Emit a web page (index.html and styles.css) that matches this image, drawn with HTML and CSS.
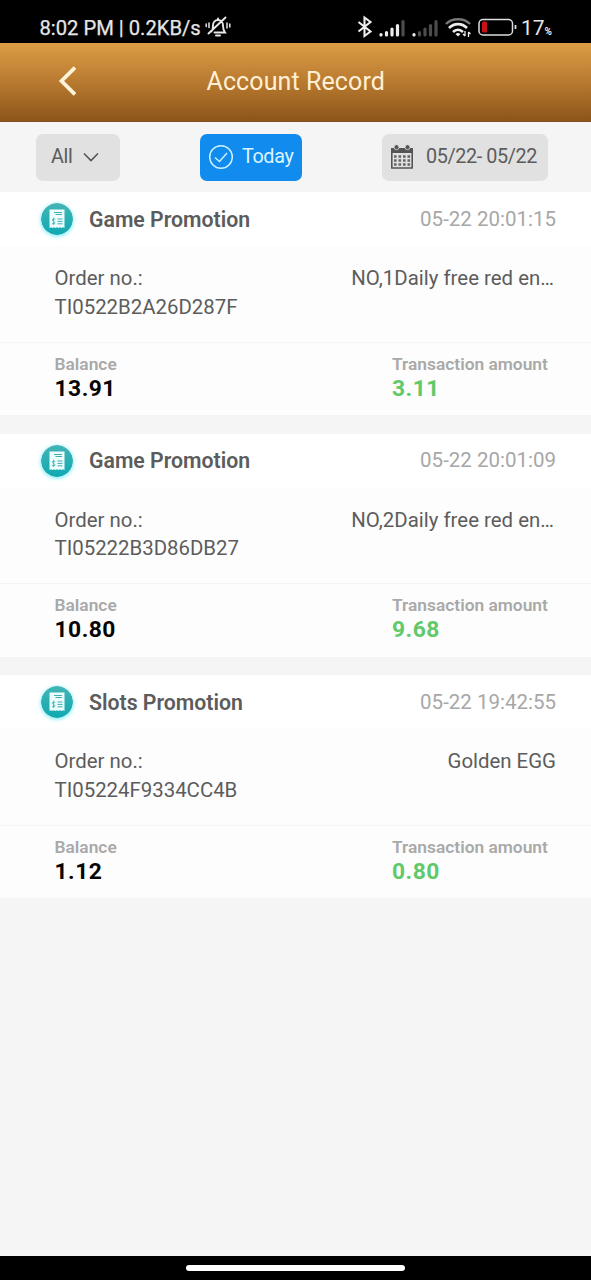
FILE: index.html
```html
<!DOCTYPE html>
<html lang="en">
<head>
<meta charset="utf-8">
<title>Account Record</title>
<link rel="stylesheet" href="styles.css">
</head>
<body>
<svg class="defs" width="0" height="0" aria-hidden="true">
  <defs>
    <linearGradient id="teal" x1="0" y1="0" x2="0" y2="1"><stop offset="0" stop-color="#43b5b6"/><stop offset="1" stop-color="#0fa9b2"/></linearGradient>
    <symbol id="receipt" viewBox="0 0 32 32">
      <circle cx="16" cy="16" r="16" fill="url(#teal)"/>
      <path d="M8.500 6.500h15v18.500l-1.500-.8-1.500.8-1.500-.8-1.500.8-1.500-.8-1.500.8-1.500-.8-1.500.8-1.500-.8-1.500.8z" fill="#eefcfc"/>
      <path d="M13 9.500h8M14.500 11.500h6.500M16.500 16h5M16.500 18.400h5M16.500 20.800h5" stroke="#3ab2b5" stroke-width="1"/>
      <path d="M14.300 16.400c-2.800-1.300-3.900 1-1.900 1.900 2.500 1 1.600 3.400-1.400 2.200M12.600 14.800v7.100" fill="none" stroke="#3ab2b5" stroke-width=".9"/>
    </symbol>
  </defs>
</svg>
<div class="screen">
  <div class="status">
    <span class="status-text">8:02 PM | 0.2KB/s</span>
    <svg class="bell" width="26" height="22" viewBox="0 0 26 22" fill="none" stroke="#e8e8e8" stroke-width="1.900" stroke-linecap="round">
      <path d="M6.500 15.500c1.200-1.400 1.500-3 1.500-6 0-3.200 2-5.500 5-5.500s5 2.300 5 5.500c0 3.500.5 5 2 7H9.500M11 19.500h4M13 4V2.500M20.500 1.500l-17 16"/>
      <path d="M4 7v4.500M1.200 8v2.400M22 7v5M24.800 8v3" stroke-width="1.500"/>
    </svg>
    <svg class="signals" width="164" height="24" viewBox="0 0 164 24" fill="none">
      <path d="M1.500 7l12 9.500-6 4.500V2.500l6 4.500-12 9.500" stroke="#eee" stroke-width="2.100"/>
      <g stroke="#eee" stroke-width="3.200" stroke-linecap="round">
        <path d="M24 19.500v.5M29.500 17.500v2.500M35 14v6M40.500 10.500v9.500"/><path d="M46 6.500v13.500" stroke="#4c4c4c"/>
        <path d="M57 19.500v.5"/><path d="M62.500 17.500v2.500M68 14v6M73.500 10.500v9.500M79 6.500v13.500" stroke="#4c4c4c"/>
      </g>
      <path d="M89 9c6-6.500 18-6.500 24 0" stroke="#777" stroke-width="2.500"/>
      <path d="M92 13c5-5.200 13-5.200 18 0M96 17c3-3 7-3 10 0" stroke="#eee" stroke-width="2.600"/>
      <path d="M98.500 19q2.500-2 5 0l-2.500 2.500z" fill="#eee"/>
      <path d="M108 16v5M111.500 22v-5M106 19l2 2M111.500 17l2 2" stroke="#eee" stroke-width="1.300"/>
      <rect x="122" y="4.500" width="33.500" height="15.500" rx="4" stroke="#ddd" stroke-width="1.500"/>
      <rect x="125" y="6.500" width="5" height="11" rx="1.500" fill="#c9101b"/>
      <path d="M158.500 10v4" stroke="#ddd" stroke-width="1.800"/>
    </svg>
    <span class="charge">17<small>%</small></span>
  </div>
  <div class="titlebar">
    <svg class="back" width="20" height="32" viewBox="0 0 20 32"><path d="M19 2.500L5.500 16 19 29.500" fill="none" stroke="#fff3da" stroke-width="3.800"/></svg>
    <h1 class="title">Account Record</h1>
  </div>
  <div class="filters">
    <div class="chip chip-all"><span>All</span>
      <svg width="16" height="10" viewBox="0 0 16 10"><path d="M1 1.500l7 7 7-7" fill="none" stroke="#555" stroke-width="1.600"/></svg>
    </div>
    <div class="chip chip-today">
      <svg width="26" height="26" viewBox="0 0 26 26" fill="none" stroke="#c9f2ff" stroke-width="1.500"><circle cx="13" cy="13" r="11.300"/><path d="M7 13.500l4.500 4L19 9"/></svg>
      <span>Today</span>
    </div>
    <div class="chip chip-date">
      <svg width="24" height="25" viewBox="0 0 24 25">
        <path d="M1 9V4h22v5z" fill="#555"/><path d="M1.800 8v16h20.400V8" fill="none" stroke="#555" stroke-width="1.600"/>
        <g fill="#555" stroke="#e1e1e1" stroke-width=".8"><circle cx="6.500" cy="3.200" r="2.500"/><circle cx="17.500" cy="3.200" r="2.500"/></g>
        <path d="M4 12.500h16.500M4 16.500h16.500M4 20.500h16.500" stroke="#666" stroke-width="2.300" stroke-dasharray="2.600 1.900"/>
      </svg>
      <span>05/22- 05/22</span>
    </div>
  </div>
  <div class="records">
    <section class="card">
      <div class="card-head"><svg class="badge"><use href="#receipt"/></svg><h2 class="name">Game Promotion</h2><span class="time">05-22 20:01:15</span></div>
      <div class="card-body"><div class="order">Order no.:<br>TI0522B2A26D287F</div><div class="note clipped">NO,1Daily free red en…</div></div>
      <div class="card-foot"><div class="balance"><div class="label">Balance</div><div class="value">13.91</div></div><div class="amount"><div class="label">Transaction amount</div><div class="value gain">3.11</div></div></div>
    </section>
    <section class="card">
      <div class="card-head"><svg class="badge"><use href="#receipt"/></svg><h2 class="name">Game Promotion</h2><span class="time">05-22 20:01:09</span></div>
      <div class="card-body"><div class="order">Order no.:<br>TI05222B3D86DB27</div><div class="note clipped">NO,2Daily free red en…</div></div>
      <div class="card-foot"><div class="balance"><div class="label">Balance</div><div class="value">10.80</div></div><div class="amount"><div class="label">Transaction amount</div><div class="value gain">9.68</div></div></div>
    </section>
    <section class="card">
      <div class="card-head"><svg class="badge"><use href="#receipt"/></svg><h2 class="name">Slots Promotion</h2><span class="time">05-22 19:42:55</span></div>
      <div class="card-body"><div class="order">Order no.:<br>TI05224F9334CC4B</div><div class="note">Golden EGG</div></div>
      <div class="card-foot"><div class="balance"><div class="label">Balance</div><div class="value">1.12</div></div><div class="amount"><div class="label">Transaction amount</div><div class="value gain">0.80</div></div></div>
    </section>
  </div>
  <div class="navbar"><div class="handle"></div></div>
</div>
</body>
</html>
```
FILE: styles.css
```css
* { box-sizing: border-box; }
body { margin: 0; background: #f5f5f5; font-family: Roboto, "Liberation Sans", sans-serif; color: #5c5c5c; }
h1, h2 { margin: 0; }
svg { display: block; flex: none; }
.defs { position: absolute; }
.screen { width: 591px; height: 1280px; display: flex; flex-direction: column; white-space: nowrap; }

.status { height: 42.5px; flex: none; background: #000; color: #e6e6e6; display: flex; padding: 12px 0 0 39.5px; font-size: 20.2px; line-height: 32px; }
.status-text { width: 165.5px; flex: none; -webkit-text-stroke: .25px; }
.bell { margin-top: 4px; }
.signals { margin: 2.5px 0 0 126px; }
.charge { font-size: 21px; }
.charge small { font-size: 10px; font-weight: 700; }

.titlebar { height: 79px; flex: none; display: flex; align-items: center; padding: 0 0 1px 56px; background: linear-gradient(#dd9d46, #b87a30 50%, #8c5519); border-bottom: 1px solid #80501f; }
.title { margin-left: 130.5px; font-size: 25px; font-weight: 400; color: #fff0d5; letter-spacing: .1px; }

.filters { height: 70.5px; flex: none; display: flex; padding: 12px 0 0 36px; font-size: 19.8px; letter-spacing: -.38px; }
.chip { height: 47px; border-radius: 7px; background: #e1e1e1; display: flex; align-items: center; flex: none; padding-bottom: 1px; }
.chip-all { width: 84px; padding-left: 15px; gap: 11px; }
.chip-today { width: 102px; margin-left: 80px; padding-left: 8px; gap: 8px; background: #118bee; color: #d9f5ff; }
.chip-date { width: 166px; margin-left: 80px; padding-left: 8px; gap: 12px; }

.records { flex: 1; display: flex; flex-direction: column; gap: 18.5px; }
.card { height: 223px; background: #fdfdfd; display: flex; flex-direction: column; }
.card-head { height: 54px; background: #fff; display: flex; align-items: center; padding: 0 35px 0 41px; }
.badge { width: 32px; height: 32px; border-radius: 50%; box-shadow: 0 1px 4px #6deaf5; }
.name { flex: 1; margin-left: 16px; font-size: 21.25px; font-weight: 600; }
.time { font-size: 20.5px; color: #a7a7a7; padding-bottom: 1px; }
.card-body { height: 95.5px; display: flex; justify-content: space-between; padding: 18px 35px 0 54.5px; font-size: 20.4px; line-height: 28.5px; }
.clipped { margin-right: 2px; letter-spacing: .02px; }
.card-foot { flex: 1; border-top: 1px solid #f5f5f5; display: flex; padding: 11px 0 0 54.5px; }
.balance { width: 337.5px; }
.label { font-size: 17.35px; line-height: 20px; font-weight: 600; color: #a9a9a9; }
.value { font-size: 22.8px; line-height: 30px; font-weight: 700; color: #050505; letter-spacing: .5px; }
.gain { color: #60c96a; }

.navbar { height: 24px; flex: none; background: #000; display: flex; justify-content: center; padding-top: 9px; }
.handle { width: 219px; height: 6px; border-radius: 3px; background: #fff; }
```
